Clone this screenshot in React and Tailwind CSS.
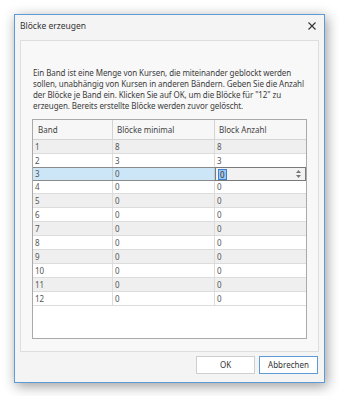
import React from 'react';

const rows = [
  ['1', '8', '8'],
  ['2', '3', '3'],
  ['3', '0', '0'],
  ['4', '0', '0'],
  ['5', '0', '0'],
  ['6', '0', '0'],
  ['7', '0', '0'],
  ['8', '0', '0'],
  ['9', '0', '0'],
  ['10', '0', '0'],
  ['11', '0', '0'],
  ['12', '0', '0'],
];

const lines = [
  'Ein Band ist eine Menge von Kursen, die miteinander geblockt werden',
  'sollen, unabhängig von Kursen in anderen Bändern. Geben Sie die Anzahl',
  'der Blöcke je Band ein. Klicken Sie auf OK, um die Blöcke für "12" zu',
  'erzeugen. Bereits erstellte Blöcke werden zuvor gelöscht.',
];

function Row({ cells, index }) {
  const selected = index === 2;
  const bg = index % 2 === 0 ? 'bg-[#efefef]' : 'bg-white';
  if (selected) {
    return (
      <div className="flex h-[14px] border-y border-[#8a8a8a] -my-[1px] relative z-10">
        <div className="w-[80px] bg-[#cde6f7] border-r border-[#b8cfe0] pl-[2px] leading-[12px]">{cells[0]}</div>
        <div className="w-[102px] bg-[#cde6f7] border-r border-[#b8cfe0] pl-[2px] leading-[12px]">{cells[1]}</div>
        <div className="flex-1 flex items-center bg-[#f2f2f2] border border-[#7a7a7a] -my-[1px] pl-[2px]">
          <span className="bg-[#9cc8f2] text-[#333] px-[1px] leading-[9px] border border-[#3a7fd0]">{cells[2]}</span>
          <div className="ml-auto mr-[4px] flex flex-col items-center gap-[2px]">
            <svg width="5" height="3" viewBox="0 0 5 3"><path d="M0 3L2.5 0L5 3Z" fill="#777" /></svg>
            <svg width="5" height="3" viewBox="0 0 5 3"><path d="M0 0L2.5 3L5 0Z" fill="#777" /></svg>
          </div>
        </div>
      </div>
    );
  }
  return (
    <div className={`flex h-[14px] border-b border-[#dcdcdc] ${bg}`}>
      <div className="w-[80px] border-r border-[#dcdcdc] pl-[2px] leading-[13px]">{cells[0]}</div>
      <div className="w-[102px] border-r border-[#dcdcdc] pl-[2px] leading-[13px]">{cells[1]}</div>
      <div className="flex-1 pl-[2px] leading-[13px]">{cells[2]}</div>
    </div>
  );
}

export default function App() {
  return (
    <div
      className="w-[339px] h-[396px] bg-white pl-[14px] pt-[14px] text-[8.5px] text-[#444]"
      style={{ fontFamily: '"Noto Sans", "Open Sans", sans-serif' }}
    >
      <div className="w-[311px] h-[369px] flex flex-col border border-[#5d9bd8] bg-[#f4f4f4] shadow-[2px_3px_12px_rgba(0,0,0,0.4)]">
        {/* title bar */}
        <div className="h-[25px] flex items-center pl-[5px] pr-[8px] pb-[3px] text-[#333]">
          <span className="text-[8.5px]">Blöcke erzeugen</span>
          <svg className="ml-auto" width="8" height="8" viewBox="0 0 8 8">
            <path d="M0.5 0.5L7.5 7.5M7.5 0.5L0.5 7.5" stroke="#333" strokeWidth="1.1" />
          </svg>
        </div>

        {/* content panel */}
        <div className="mx-[5px] h-[312px] border border-[#dedede] bg-[#f8f8f8] pt-[26px] pl-[11px] pr-[11px]">
          <div className="pl-[1px] leading-[11px] text-[8px] tracking-[-0.08px] text-[#3c3c3c]">
            {lines.map((l) => (
              <div key={l} className="whitespace-nowrap">{l}</div>
            ))}
          </div>

          <div className="mt-[8px] w-[275px] h-[220px] border border-[#a9a9a9] bg-white text-[8px] text-[#555]">
            <div className="flex h-[20px] border-b border-[#d4d4d4] bg-[#f7f7f7] text-[#444]">
              <div className="w-[80px] border-r border-[#d4d4d4] pl-[5px] flex items-center">Band</div>
              <div className="w-[102px] border-r border-[#d4d4d4] pl-[4px] flex items-center">Blöcke minimal</div>
              <div className="flex-1 pl-[4px] flex items-center">Block Anzahl</div>
            </div>
            {rows.map((r, i) => (
              <Row key={r[0]} cells={r} index={i} />
            ))}
          </div>
        </div>

        {/* buttons */}
        <div className="flex justify-end gap-[4px] pr-[6px] pt-[4px] text-[8px] text-[#333]">
          <button className="w-[59px] h-[18px] border border-[#cfcfcf] bg-white">OK</button>
          <button className="w-[59px] h-[18px] border border-[#5d9bd8] bg-white">Abbrechen</button>
        </div>
      </div>
    </div>
  );
}
